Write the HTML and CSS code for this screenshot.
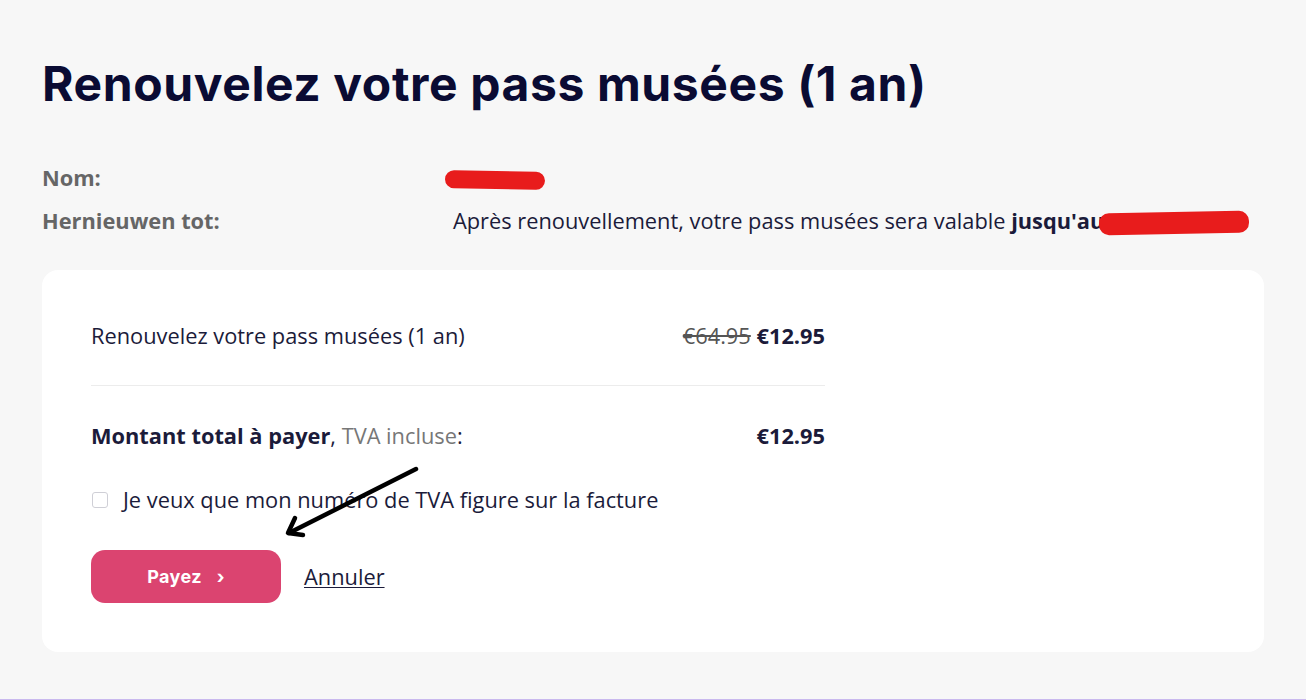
FILE: index.html
```html
<!DOCTYPE html>
<html lang="fr">
<head>
<meta charset="utf-8">
<title>Renouvelez votre pass musées</title>
<link rel="stylesheet" href="styles.css">
</head>
<body>
<main class="page">
  <h1 class="title">Renouvelez votre pass musées (1 an)</h1>
  <dl class="info">
    <dt class="info-label">Nom:</dt>
    <dd class="info-value"><span class="redact redact-name"></span></dd>
    <dt class="info-label">Hernieuwen tot:</dt>
    <dd class="info-value">Après renouvellement, votre pass musées sera valable <strong>jusqu'au</strong><span class="redact redact-date"></span></dd>
  </dl>
  <section class="card">
    <div class="card-inner">
      <div class="line">
        <span class="line-name">Renouvelez votre pass musées (1 an)</span>
        <span class="line-price"><s class="old">€64.95</s> <strong>€12.95</strong></span>
      </div>
      <hr class="divider">
      <div class="line total">
        <span class="line-name"><strong>Montant total à payer</strong>, <span class="muted">TVA incluse</span>:</span>
        <span class="line-price"><strong>€12.95</strong></span>
      </div>
      <label class="check">
        <span class="box"></span>
        <span>Je veux que mon numéro de TVA figure sur la facture</span>
      </label>
      <div class="actions">
        <button class="pay" type="button">Payez <span class="chev">›</span></button>
        <a class="cancel" href="#">Annuler</a>
      </div>
    </div>
  </section>
  <svg class="arrow" width="140" height="80" viewBox="0 0 140 80">
    <path d="M131 4 L4 68" stroke="#000" stroke-width="4.5" stroke-linecap="round" fill="none"/>
    <path d="M10 53 L3 68 L18 70" stroke="#000" stroke-width="4.5" stroke-linecap="round" stroke-linejoin="round" fill="none"/>
  </svg>
</main>
<div class="bottom-line"></div>
</body>
</html>
```

FILE: styles.css
```css
* { box-sizing: border-box; }
html, body { margin: 0; padding: 0; }
body {
  background: #f7f7f7;
  font-family: "Open Sans", "Liberation Sans", sans-serif;
  color: #1b1b3a;
  height: 700px;
  overflow: hidden;
  position: relative;
}
.page {
  padding: 52px 42px 0 42px;
  position: relative;
}
.title {
  margin: 0;
  font-family: "Inter", "DejaVu Sans", sans-serif;
  font-weight: 700;
  font-size: 48px;
  line-height: 64px;
  color: #0a0b33;
  letter-spacing: 0.6px;
}
.info {
  margin: 47px 0 0 0;
  display: grid;
  grid-template-columns: 411px 1fr;
  row-gap: 13px;
  font-size: 21.8px;
  line-height: 30px;
}
.info-label {
  font-weight: 700;
  color: #666;
  margin: 0;
}
.info-value { margin: 0; color: #1b1b3a; }
.info-value strong { font-weight: 700; }
.redact {
  display: inline-block;
  background: #e81c1c;
  border-radius: 10px;
  vertical-align: middle;
}
.redact-name { width: 100px; height: 18px; margin-left: -8px; transform: rotate(1deg); }
.redact-date { width: 150px; height: 22px; margin-left: -5px; transform: rotate(-1deg); }
.card {
  margin-top: 34px;
  background: #fff;
  border-radius: 16px;
  padding: 51px 49px 49px 49px;
}
.card-inner { width: 734px; }
.line {
  display: flex;
  justify-content: space-between;
  align-items: center;
  font-size: 21.8px;
  line-height: 30px;
}
.line-price strong { font-weight: 700; }
.old { color: #555; text-decoration: line-through; }
.muted { color: #777; }
.divider {
  border: 0;
  border-top: 1px solid #ececec;
  margin: 34px 0 35px 0;
}
.check {
  display: flex;
  align-items: center;
  gap: 15px;
  margin-top: 34px;
  font-size: 21.8px;
  line-height: 30px;
}
.box {
  width: 16px;
  height: 16px;
  border: 1px solid #cfcfd6;
  border-radius: 3px;
  background: #fff;
  margin-left: 1px;
}
.actions {
  display: flex;
  align-items: center;
  gap: 23px;
  margin-top: 35px;
}
.pay {
  width: 190px;
  height: 53px;
  border: 0;
  border-radius: 14px;
  background: #db4470;
  color: #fff;
  font-family: "Inter", "DejaVu Sans", sans-serif;
  font-weight: 700;
  font-size: 18px;
  letter-spacing: 0.4px;
  cursor: pointer;
}
.chev { margin-left: 10px; }
.cancel {
  font-size: 21.8px;
  color: #1b1b3a;
  text-decoration: underline;
  text-decoration-thickness: 1px;
  text-underline-offset: 2px;
}
.arrow {
  position: absolute;
  left: 285px;
  top: 465px;
}
.bottom-line {
  position: absolute;
  left: 0; right: 0; bottom: 0;
  height: 1px;
  background: #c9b9ee;
}
```
